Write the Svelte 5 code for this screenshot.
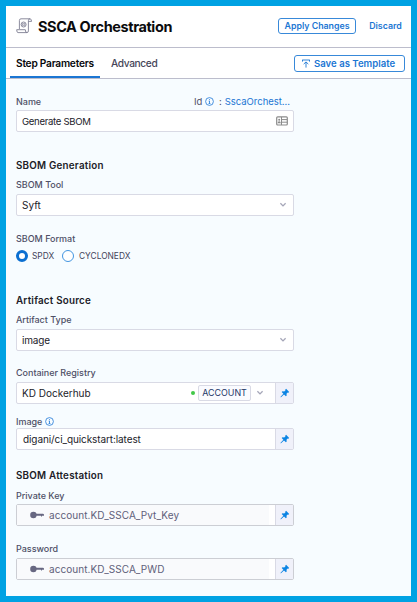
<script>
  const pinned = [
    { label: 'Private Key', value: 'account.KD_SSCA_Pvt_Key', kind: 'private' },
    { label: 'Password', value: 'account.KD_SSCA_PWD', kind: 'password' }
  ];
</script>

{#snippet info()}
  <svg class="info" width="9" height="9" viewBox="0 0 9 9" fill="none" stroke="#2b80d9" stroke-width=".85">
    <circle cx="4.5" cy="4.5" r="3.9" /><path d="M4.5 4v2.6M4.5 2.2v1M3.7 4.1h.8M3.6 6.5h1.8" />
  </svg>
{/snippet}

{#snippet chevron()}
  <svg class="chevron" width="8" height="6" viewBox="0 0 8 6" fill="none" stroke="#a5a6b8" stroke-width="1.3"><path d="M1.400 1.300 4 3.900 6.600 1.300" /></svg>
{/snippet}

{#snippet pin()}
  <span class="pin">
    <svg width="10" height="10" viewBox="0 0 10 10" fill="#0b84e3">
      <path d="M6.100.8 9.200 3.900l-.9.8-.6-.2-1.200 1.300.2 1.700-.8.8-1.900-1.900L1 9.200.5 9.300l.1-.5L3.400 5.800 1.700 4.100l.8-.8 1.700.2 1.300-1.300-.2-.6z" />
    </svg>
  </span>
{/snippet}

<main class="frame">
  <header>
    <svg class="logo" width="17" height="16" viewBox="0 0 17 16" fill="none" stroke="#77778d" stroke-width=".85">
      <path d="M3.400 11V2.500Q3.400.8 5 .8h9Q12.400.8 12.400 2.700v10.200q0 1.700-1.500 1.700H2Q.7 14.600.7 11.700h8.600q0 2.900 1.700 2.900M14 .8q1.500 0 1.500 2.600h-3" />
      <circle cx="7.600" cy="6.500" r="2.500" /><path d="M6.300 5.700h2.600v1.600H6.300z" stroke-width=".7" />
    </svg>
    <h1>SSCA Orchestration</h1>
    <button class="apply">Apply Changes</button>
    <button class="discard">Discard</button>
  </header>

  <nav>
    <span class="tab active">Step Parameters</span>
    <span class="tab advanced">Advanced</span>
    <button class="save">
      <svg width="8" height="9" viewBox="0 0 8 9" fill="none" stroke="#1b76d3" stroke-width=".9"><path d="M.2 1h7.600M.5 1v1.600M7.500 1v1.600M4 8.600V3M1.700 5.100 4 2.900l2.300 2.200" /></svg>
      <span>Save as Template</span>
    </button>
  </nav>

  <section class="form">
    <div class="field name">
      <div class="label split">
        <span>Name</span>
        <span class="id">Id {@render info()}<span class="colon">:</span><a>SscaOrchest...</a></span>
      </div>
      <div class="box"><span class="val-name">Generate SBOM</span>
        <svg class="card" width="12" height="10" viewBox="0 0 12 10"><rect x=".7" y=".8" width="10.600" height="8.200" rx="1" fill="#fff" stroke="#8b8b8b" stroke-width="1.200" /><path d="M5.500 1v8M6 3.600h5M6 6.200h5" stroke="#8b8b8b" /><circle cx="3.200" cy="3.700" r="1" fill="#8b8b8b" /><path d="M1.600 7.200q0-2 1.600-2t1.600 2z" fill="#8b8b8b" /></svg>
      </div>
    </div>

    <h2 class="generation">SBOM Generation</h2>
    <div class="field tool">
      <div class="label">SBOM Tool</div>
      <div class="box"><span class="val-syft">Syft</span>{@render chevron()}</div>
    </div>

    <div class="field format">
      <div class="label">SBOM Format</div>
      <div class="radios">
        <i class="radio checked"></i><span class="spdx">SPDX</span>
        <i class="radio"></i><span class="cyclone">CYCLONEDX</span>
      </div>
    </div>

    <h2 class="source">Artifact Source</h2>
    <div class="field type">
      <div class="label">Artifact Type</div>
      <div class="box"><span class="val-image">image</span>{@render chevron()}</div>
    </div>

    <div class="field registry">
      <div class="label">Container Registry</div>
      <div class="box has-pin">
        <span class="val-reg">KD Dockerhub</span>
        <i class="dot"></i><span class="scope">ACCOUNT</span>{@render chevron()}{@render pin()}
      </div>
    </div>

    <div class="field image">
      <div class="label">Image {@render info()}</div>
      <div class="box has-pin"><span class="val-path">digani/ci_quickstart:latest</span>{@render pin()}</div>
    </div>

    <h2 class="attest">SBOM Attestation</h2>
    {#each pinned as item}
      <div class="field {item.kind}">
        <div class="label">{item.label}</div>
        <div class="box has-pin locked">
          <div class="secret">
            <svg width="14" height="8" viewBox="0 0 14 8" fill="#676781"><circle cx="3.400" cy="4" r="3.200" /><path d="M5 2.800h7.800q1.200 0 1.200 1v1h-2v.6h-1v-.6H5z" /></svg>
            <span>{item.value}</span>
          </div>
          {@render pin()}
        </div>
      </div>
    {/each}
  </section>
</main>

<style>
  .frame { box-sizing: border-box; width: 417px; height: 602px; border: 6px solid #00a2e3; background: #f7fcff; font-family: Inter, "Liberation Sans", sans-serif; color: #22222a; overflow: hidden; }
  header, nav { box-sizing: border-box; display: flex; align-items: center; background: #fff; border-bottom: 1px solid #bcbdcc; }
  header { height: 42px; padding: 0 9px 1px 10px; }
  nav { height: 31px; padding: 0 6px 0 4px; }
  h1, h2 { margin: 0; white-space: nowrap; }
  h1 { font-size: 14.500px; font-weight: 700; letter-spacing: -.4px; margin-left: 5px; padding-top: 2px; color: #0b0b0d; line-height: 20px; }
  button { box-sizing: border-box; font: 600 8.800px/14px Inter, sans-serif; color: #1b76d3; background: #fff; padding: 0; border: 0; white-space: nowrap; }
  .apply { width: 78px; height: 16px; margin-left: auto; border: 1px solid #3889d9; border-radius: 3px; }
  .discard { width: 33px; margin-left: 13px; }
  .tab { box-sizing: border-box; height: 30px; line-height: 31px; font-size: 10.200px; white-space: nowrap; }
  .active { width: 90px; padding-left: 6px; font-weight: 600; border-bottom: 2px solid #1b76d3; color: #08080b; letter-spacing: -.25px; }
  .advanced { margin-left: 11px; font-weight: 500; color: #454558; letter-spacing: -.38px; }
  .save { display: flex; align-items: center; width: 111px; height: 17px; margin-left: auto; padding: 1px 0 0 7px; border: 1px solid #3889d9; border-radius: 3px; font-size: 9.600px; gap: 4px; }
  .form { padding: 16px 0 0 10px; width: 278px; }
  .label { height: 12px; line-height: 12px; font-size: 9px; font-weight: 500; color: #4f5067; white-space: nowrap; letter-spacing: -.02px; }
  .split { line-height: 13px; display: flex; justify-content: space-between; }
  .info { vertical-align: -1px; }
  .id { padding-right: 4px; font-size: 9.500px; font-weight: 400; }
  .colon { margin: 0 3px 0 5px; }
  a { color: #1b76d3; }
  h2 { height: 14px; font-size: 9.800px; line-height: 16px; font-weight: 600; letter-spacing: .23px; color: #202027; }
  .box { box-sizing: border-box; height: 22px; display: flex; align-items: center; padding: 0 7px 0 5px; background: #fff; border: 1px solid #d9dae5; border-radius: 2px; font-size: 10px; white-space: nowrap; }
  .name .box { margin-top: 3px; }
  .val-name { font-size: 9.600px; letter-spacing: -.32px; }
  .val-image { letter-spacing: -.2px; }
  .box > .card, .box > .chevron { margin-left: auto; }
  .box > .card { margin-right: -2px; }
  .box > .chevron { margin-right: -1px; }
  .generation { margin-top: 26px; }
  .tool { margin-top: 7px; }
  .tool .box, .type .box { margin-top: 3px; }
  .format { margin-top: 17px; }
  .radios { display: flex; align-items: center; height: 12px; margin-top: 5px; font-size: 8.400px; color: #42425a; }
  .radio { box-sizing: border-box; width: 12px; height: 12px; border: 1px solid #4295e1; border-radius: 50%; background: #fff; }
  .checked { border: 3.500px solid #0b6fd1; }
  .spdx { width: 30px; margin-left: 4px; }
  .cyclone { margin-left: 5px; }
  .source { margin-top: 31px; }
  .type { margin-top: 7px; }
  .registry { margin-top: 16px; }
  .image .label, .private .label { line-height: 13px; }
  .registry .box { margin-top: 3px; }
  .box.has-pin { padding-right: 0; }
  .pin { box-sizing: border-box; align-self: stretch; display: grid; place-items: center; width: 18px; margin-left: auto; background: #f0f1fa; border-left: 1px solid #d9dae5; }
  .dot { width: 4px; height: 4px; border-radius: 50%; background: #42c848; margin-left: auto; }
  .scope { box-sizing: border-box; width: 53px; height: 16px; margin-left: 3px; border: 1px solid #d9dae5; border-radius: 2px; background: #fafbff; text-align: center; line-height: 14px; font-size: 8.900px; color: #1c3566; }
  .registry .chevron { margin: 0 11px 0 5px; }
  .registry .pin { margin-left: 0; }
  .image { margin-top: 11px; }
  .image .box { margin-top: 1px; }
  .val-path { margin-left: 1px; letter-spacing: -.1px; }
  .attest { margin-top: 18px; }
  .private { margin-top: 7px; }
  .private .box { margin-top: 3px; }
  .password { margin-top: 17px; }
  .password .box { margin-top: 3px; }
  .locked { border-color: #ccced4; padding-left: 0; }
  .secret { display: flex; align-items: center; align-self: stretch; width: 239px; padding-left: 13px; gap: 5px; background: #f9fafc; color: #60607a; letter-spacing: .06px; }
</style>
